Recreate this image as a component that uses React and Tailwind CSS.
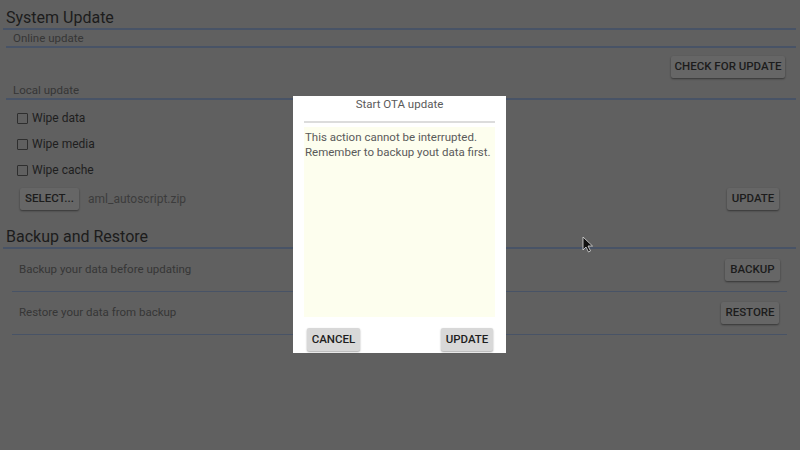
import React from "react";

function Btn({ children, className = "" }) {
  return (
    <div
      className={
        "h-[22px] px-[3px] flex items-center justify-center whitespace-nowrap bg-[#666666] text-[#1c1c1c] text-[11.5px] font-medium rounded-[2px] shadow-[0_1px_2px_rgba(0,0,0,0.45)] " +
        className
      }
    >
      {children}
    </div>
  );
}

function Check({ label }) {
  return (
    <div className="h-[26px] flex items-center pl-[17px]">
      <div className="w-[11px] h-[11px] border border-[#2e2e2e] rounded-[1px]" />
      <span className="ml-[4px] text-[12px] text-[#1e1e1e]">{label}</span>
    </div>
  );
}

export default function App() {
  return (
    <div
      className="relative w-[800px] h-[450px] bg-[#606060] overflow-hidden pt-[2px]"
      style={{ fontFamily: "Roboto, 'Liberation Sans', sans-serif" }}
    >
      {/* System Update header */}
      <div className="ml-[3px] mr-[4px] pt-[6px] pl-[3px] border-b-2 border-[#485366] text-[16px] leading-[20px] text-[#1c1c1c]">
        System Update
      </div>
      <div className="ml-[6px] mr-[4px] pl-[7px] border-b-2 border-[#485366] text-[11.5px] leading-[16px] text-[#363636]">
        Online update
      </div>
      <div className="mt-[8px] flex justify-end pr-[15px]">
        <Btn className="w-[114px]">CHECK FOR UPDATE</Btn>
      </div>
      <div className="mt-[4px] ml-[6px] mr-[4px] pl-[7px] border-b-2 border-[#485366] text-[11.5px] leading-[16px] text-[#363636]">
        Local update
      </div>
      <div className="mt-[5px]">
        <Check label="Wipe data" />
        <Check label="Wipe media" />
        <Check label="Wipe cache" />
      </div>
      <div className="mt-[5px] flex items-center pl-[20px] pr-[21px]">
        <Btn className="w-[59px]">SELECT...</Btn>
        <span className="ml-[9px] text-[12px] text-[#3c3c3c]">aml_autoscript.zip</span>
        <div className="flex-1" />
        <Btn className="w-[52px]">UPDATE</Btn>
      </div>

      {/* Backup and Restore */}
      <div className="mt-[17px] ml-[3px] mr-[4px] pl-[3px] border-b-2 border-[#485366] text-[16px] leading-[20px] text-[#1c1c1c]">
        Backup and Restore
      </div>
      <div className="ml-[12px] mr-[13px] pl-[7px] pr-[7px] h-[43px] flex items-center justify-between border-b border-[#485366]">
        <span className="text-[11.5px] text-[#363636]">Backup your data before updating</span>
        <Btn className="w-[55px]">BACKUP</Btn>
      </div>
      <div className="ml-[12px] mr-[13px] pl-[7px] pr-[8px] h-[43px] flex items-center justify-between border-b border-[#485366]">
        <span className="text-[11.5px] text-[#363636]">Restore your data from backup</span>
        <Btn className="w-[58px]">RESTORE</Btn>
      </div>

      {/* Dialog */}
      <div className="absolute left-[293px] top-[96px] w-[213px] h-[257px] bg-white flex flex-col">
        <div className="h-[16px] text-center text-[11.5px] leading-[16px] text-[#5a5a5a]">Start OTA update</div>
        <div className="mt-[9px] mx-[11px] h-[2px] bg-[#dcdcdc]" />
        <div className="mt-[4px] mx-[11px] h-[190px] bg-[#fdfeee] pt-[3px] pl-[1px] text-[11.5px] leading-[15px] text-[#5a5a5a]">
          This action cannot be interrupted.
          <br />
          Remember to backup yout data first.
        </div>
        <div className="mt-[11px] flex justify-between pl-[14px] pr-[13px]">
          <div className="h-[23px] w-[53px] flex items-center justify-center bg-[#d8d8d8] text-[11.5px] font-medium text-[#1e1e1e] rounded-[2px] shadow-[0_1px_2px_rgba(0,0,0,0.35)]">
            CANCEL
          </div>
          <div className="h-[23px] w-[52px] flex items-center justify-center bg-[#d8d8d8] text-[11.5px] font-medium text-[#1e1e1e] rounded-[2px] shadow-[0_1px_2px_rgba(0,0,0,0.35)]">
            UPDATE
          </div>
        </div>
      </div>

      {/* Mouse cursor */}
      <svg className="absolute left-[582px] top-[236px]" width="12" height="17" viewBox="0 0 12 17">
        <path d="M1 1 L1 14 L4 11 L6.5 16 L8.5 15 L6 10 L10.5 10 Z" fill="#111" stroke="#ddd" strokeWidth="0.8" />
      </svg>
    </div>
  );
}
